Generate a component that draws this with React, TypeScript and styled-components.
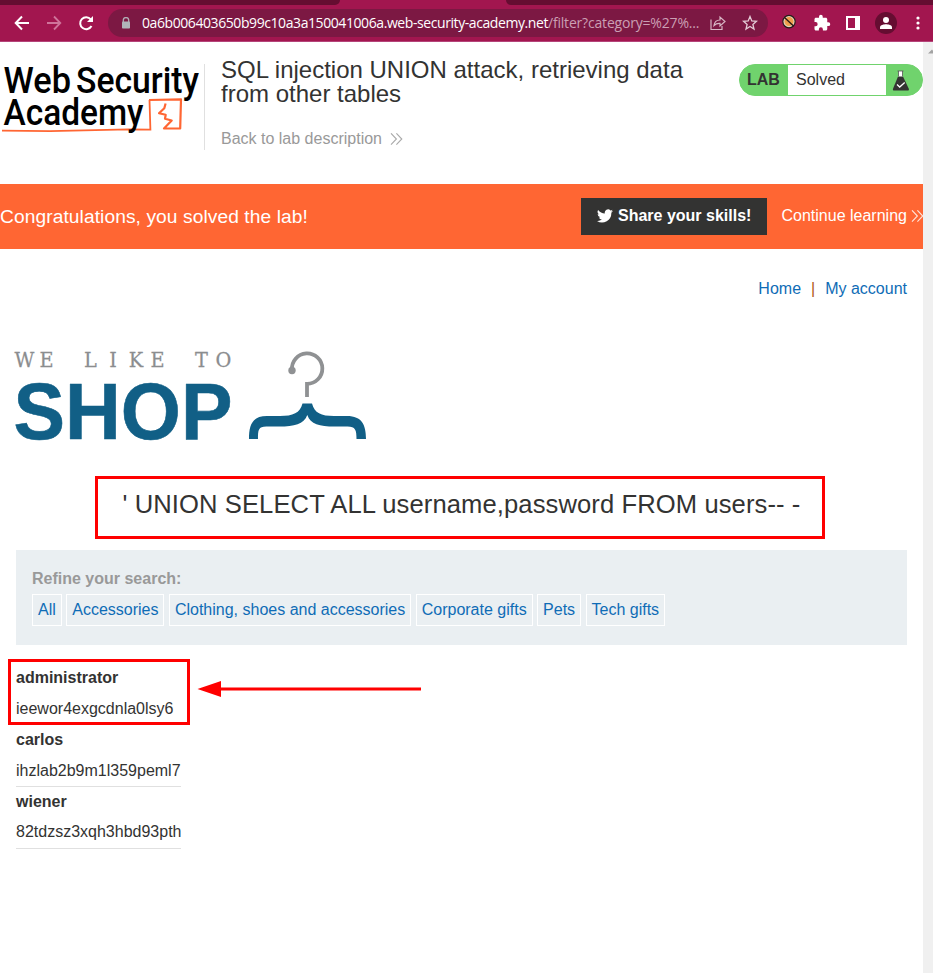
import React from "react";
import styled, { createGlobalStyle } from "styled-components";

const GlobalStyle = createGlobalStyle`
  * { box-sizing: border-box; }
  html, body { margin: 0; padding: 0; background: #fff; overflow: hidden; }
  body { font-family: "Liberation Sans", Arial, sans-serif; font-size: 16px; color: #333332; }
  a { text-decoration: none; color: inherit; }
  svg { display: block; flex: none; }
`;

const Window = styled.div`
  width: 933px;
  height: 973px;
  display: flex;
  flex-direction: column;
  overflow: hidden;
`;

const TabStrip = styled.div`
  height: 5px;
  flex: none;
  background: #a2164f;
  display: flex;
  justify-content: space-between;
`;

const StripPart = styled.div<{ $side: "left" | "right" }>`
  background: #650d31;
  width: ${(p) => (p.$side === "left" ? 340 : 427)}px;
  border-radius: ${(p) => (p.$side === "left" ? "0 0 6px 0" : "0 0 0 6px")};
`;

const Toolbar = styled.div`
  height: 37px;
  flex: none;
  background: #a2164f;
  border-bottom: 1px solid #b5457a;
  display: flex;
  align-items: center;
  padding-left: 14px;
`;

const NavButtons = styled.div`
  display: flex;
  gap: 16px;
  width: 94px;
`;

const AddressBar = styled.div`
  width: 660px;
  height: 28px;
  border-radius: 14px;
  background: #7c1843;
  display: flex;
  align-items: center;
  padding: 0 10px 0 13px;
`;

const Url = styled.div`
  font-family: "Open Sans", "Noto Sans", sans-serif;
  font-size: 14px;
  letter-spacing: -0.42px;
  line-height: 20px;
  white-space: nowrap;
  color: #fff;
  width: 568px;
  margin-left: 11px;
  padding-bottom: 1px;
`;

const UrlPath = styled.span`
  color: #cb9fb3;
  letter-spacing: -0.19px;
`;

const AddressIcons = styled.div`
  display: flex;
  gap: 16px;
`;

const Extensions = styled.div`
  display: flex;
  align-items: center;
  margin-left: 12px;
  gap: 14.5px;
`;

const Avatar = styled.div`
  width: 22px;
  height: 22px;
  border-radius: 50%;
  background: #650d31;
  display: flex;
  align-items: center;
  justify-content: center;
  margin: 0 -1px;
`;

const Viewport = styled.div`
  flex: 1;
  display: flex;
  min-height: 0;
`;

const Page = styled.div`
  width: 923px;
  flex: none;
`;

const Scrollbar = styled.div`
  width: 10px;
  background: #f0f0f0;
  overflow: hidden;
  padding: 7px 0 0 5px;
`;

const Header = styled.header`
  height: 142px;
  display: flex;
  padding-top: 16px;
`;

const LogoCell = styled.div`
  width: 205px;
  height: 92px;
  flex: none;
  display: flex;
`;

const HeaderDivider = styled.div`
  width: 1px;
  height: 86px;
  margin-top: 6px;
  background: #e0e0e0;
`;

const TitleBlock = styled.div`
  width: 534px;
  flex: none;
  padding-left: 16px;
`;

const Title = styled.h2`
  margin: 0;
  font-size: 24px;
  line-height: 24px;
  font-weight: 400;
  white-space: nowrap;
`;

const BackLink = styled.a`
  display: flex;
  align-items: center;
  gap: 8px;
  margin-top: 24px;
  line-height: 18px;
  color: #999;
`;

const StatusPill = styled.div`
  width: 184px;
  height: 32px;
  margin-top: 6px;
  border: 1px solid #70d36d;
  border-radius: 16px;
  background: #70d36d;
  display: flex;
  overflow: hidden;
  line-height: 30px;
`;

const StatusTag = styled.div`
  width: 48px;
  padding-left: 7px;
  font-weight: 700;
`;

const StatusText = styled.div`
  width: 98px;
  padding-left: 8px;
  background: #fff;
`;

const StatusIcon = styled.div`
  padding: 5px 0 0 6px;
`;

const Banner = styled.section`
  height: 65px;
  background: #ff6633;
  color: #fff;
  display: flex;
  align-items: center;
`;

const BannerText = styled.div`
  width: 581px;
  flex: none;
  font-size: 19.2px;
  letter-spacing: 0.08px;
  white-space: nowrap;
`;

const ShareButton = styled.a`
  width: 186px;
  height: 37px;
  flex: none;
  background: #333332;
  font-weight: 700;
  display: flex;
  align-items: center;
  gap: 5px;
  padding: 0 0 2px 16px;
  white-space: nowrap;
`;

const ContinueLink = styled.a`
  display: flex;
  align-items: center;
  gap: 4px;
  margin-left: 14.5px;
  padding-bottom: 1px;
  white-space: nowrap;
`;

const TopNav = styled.nav`
  display: flex;
  justify-content: flex-end;
  gap: 10px;
  padding: 31px 16px 0 0;
  height: 87px;
  line-height: 18px;
`;

const NavLink = styled.a`
  color: #0f6cb6;
`;

const NavBar = styled.span`
  color: #b05a12;
`;

const ShopLogo = styled.div`
  height: 140px;
  padding: 9px 0 0 12px;
`;

const Heading = styled.div`
  width: 730px;
  height: 63px;
  margin-left: 95px;
  border: 3px solid #f00;
  display: flex;
  padding-left: 24.5px;
  font-size: 25.6px;
  letter-spacing: 0.09px;
  line-height: 51px;
  white-space: pre;
`;

const Filters = styled.section`
  margin: 11px 16px 0;
  height: 95px;
  background: #eaeff2;
  padding: 20px 16px;
`;

const FilterLabel = styled.div`
  line-height: 18px;
  font-weight: 700;
  color: #999;
`;

const FilterRow = styled.div`
  display: flex;
  gap: 4.45px;
  margin-top: 6px;
`;

const FilterChip = styled.a`
  height: 32px;
  line-height: 29px;
  padding: 0 5px;
  border: 1px solid #fff;
  color: #0f6cb6;
  white-space: nowrap;
`;

const Results = styled.section`
  display: flex;
  align-items: flex-start;
  padding: 14px 0 0 8px;
`;

const UserList = styled.div`
  width: 182px;
`;

const UserName = styled.div`
  font-weight: 700;
  line-height: 20px;
  white-space: nowrap;
`;

const Password = styled.div`
  line-height: 20px;
  margin-top: 11px;
  white-space: nowrap;
`;

const User = styled.div`
  width: 165px;
  height: 63px;
  margin-left: 8px;
  padding-top: 6px;
  border-bottom: 1px solid #e0e0e0;

  &:last-child {
    height: 62px;
    padding-top: 5px;
  }
  &:last-child ${Password} {
    margin-top: 10px;
  }
`;

const MarkedUser = styled.div`
  width: 182px;
  height: 66px;
  margin-bottom: -1px;
  padding: 6px 0 0 5px;
  border: 3px solid #f00;
`;

const ArrowCell = styled.div`
  margin: 20px 0 0 7px;
`;

const users = [
  { name: "administrator", password: "ieewor4exgcdnla0lsy6", marked: true },
  { name: "carlos", password: "ihzlab2b9m1l359peml7" },
  { name: "wiener", password: "82tdzsz3xqh3hbd93pth" },
];

const filters = ["All", "Accessories", "Clothing, shoes and accessories", "Corporate gifts", "Pets", "Tech gifts"];

const DoubleChevron = ({ color }: { color: string }) => (
  <svg width="13" height="13" viewBox="0 0 13 13" fill="none" stroke={color} strokeWidth="1.1">
    <path d="M1 .3 6.400 6 1 11.700M6.400 .3l5.400 5.700-5.400 5.700" />
  </svg>
);

const AcademyLogo = () => (
  <svg width="204" height="80" viewBox="0 58 204 80">
    <path d="M2 130.600 50 131.200l79-1.800 21.400.3-.9-29.700" fill="none" stroke="#ff6633" strokeWidth="1.800" />
    <path d="M149 100 181 99.300l-.8 29.100-16.200.1 7.700-8-6.700-1.800.7-4-6.700-1.500 5.300-5 1.300-4.700" fill="none" stroke="#ff6633" strokeWidth="2.200" strokeLinejoin="round" />
    <g fontFamily="Roboto, sans-serif" fontWeight="500" fill="#000" fontSize="37.500">
      <text x="3.500" y="92.500" textLength="67.500" lengthAdjust="spacingAndGlyphs">Web</text>
      <text x="76" y="92.500" textLength="123" lengthAdjust="spacingAndGlyphs">Security</text>
      <text x="3.500" y="125" textLength="140" lengthAdjust="spacingAndGlyphs">Academy</text>
    </g>
  </svg>
);

const HangerLogo = () => (
  <svg width="360" height="100" viewBox="12 345 360 100">
    <text
      transform="scale(.92 1)"
      x="26.600 50.500 62 98.400 122.800 147.800 171.200 185 219 242.900"
      y="367.300"
      textAnchor="middle"
      fontFamily="'DejaVu Serif', serif"
      fontSize="21"
      fill="#8b8d8f"
      stroke="#8b8d8f"
      strokeWidth=".25"
    >WE LIKE TO</text>
    <text x="13.500" y="438.500" textLength="219" lengthAdjust="spacingAndGlyphs" fontFamily="'Liberation Sans', sans-serif" fontWeight="700" fontSize="80" fill="#115f86" stroke="#115f86" strokeWidth=".6">SHOP</text>
    <circle cx="292" cy="370.500" r="3.700" fill="#8f9193" />
    <path d="M292 370a15.200 15.200 0 1 1 15 13.800V397" fill="none" stroke="#8f9193" strokeWidth="3.800" />
    <path d="M249 439c0-14 3-23 18-23h13c13 0 20-3 22.500-12.500h9.500c2.500 9.500 9 12.500 22 12.500h13c15 0 19 9 19 23h-9.500c0-9-1-12.500-9-12.500h-13c-15 0-24-2-27.200-11.500-3.500 9.500-13 11.500-28 11.500h-13c-8 0-8.300 3.500-8.300 12.500z" fill="#115f86" />
  </svg>
);

export default function App() {
  return (
    <Window>
      <GlobalStyle />
      <TabStrip>
        <StripPart $side="left" />
        <StripPart $side="right" />
      </TabStrip>
      <Toolbar>
        <NavButtons>
          <svg width="16" height="16" viewBox="0 0 16 16" fill="none" stroke="#fff" strokeWidth="2"><path d="M15 8H2M8 1.500 1.700 8 8 14.500" /></svg>
          <svg width="16" height="16" viewBox="0 0 16 16" fill="none" stroke="#cf749b" strokeWidth="1.800"><path d="M1 8h13M8 1.500 14.300 8 8 14.500" /></svg>
          <svg width="16" height="16" viewBox="0 0 16 16" fill="none" stroke="#fff" strokeWidth="2"><path d="M13.500 11A6 6 0 1 1 12.800 4.300L14 6" /><path d="M15 1v6H9z" fill="#fff" stroke="none" /></svg>
        </NavButtons>
        <AddressBar>
          <svg width="10" height="12" viewBox="0 0 10 12"><path d="M2.300 5V3.300a2.700 2.700 0 0 1 5.400 0V5" fill="none" stroke="#b0adb5" strokeWidth="1.300" /><rect x="1" y="4.500" width="8" height="7" rx=".8" fill="#b0b3b8" /></svg>
          <Url>0a6b006403650b99c10a3a150041006a.web-security-academy.net<UrlPath>/filter?category=%27%...</UrlPath></Url>
          <AddressIcons>
            <svg width="16" height="16" viewBox="0 0 16 16" fill="none" stroke="#d7b5c4" strokeWidth="1.200"><path d="M1 4.500v10h11V11M4 10.500c.5-4 2.500-5.500 6-5.500V2l5 4.500-5 4.500V8.400c-3-.2-4.500.5-6 2.100z" /></svg>
            <svg width="16" height="16" viewBox="0 0 16 16" fill="none" stroke="#e4ccd7" strokeWidth="1.300"><path d="m8 1.500 1.800 4.400 4.700.4-3.600 3.100 1.100 4.600L8 11.500 4 14l1.100-4.600-3.600-3.100 4.700-.4z" /></svg>
          </AddressIcons>
        </AddressBar>
        <Extensions>
          <svg width="18" height="18" viewBox="0 0 18 18"><circle cx="9" cy="7.600" r="6.200" fill="#e5d5bd" stroke="#261d18" strokeWidth="1.200" /><circle cx="9" cy="7.600" r="4.500" fill="#ef9e4c" /><path d="m4.500 3.500 9 8.500" stroke="#271915" strokeWidth="1.300" /></svg>
          <svg width="18" height="18" viewBox="0 0 24 24" fill="#fff"><path d="M20.500 11H19V7c0-1.100-.9-2-2-2h-4V3.500a2.500 2.500 0 0 0-5 0V5H4c-1.100 0-2 .9-2 2v3.800h1.500a2.700 2.700 0 0 1 0 5.400H2V20c0 1.100.9 2 2 2h3.800v-1.500a2.700 2.700 0 0 1 5.400 0V22H17c1.100 0 2-.9 2-2v-4h1.500a2.500 2.500 0 0 0 0-5z" /></svg>
          <svg width="16" height="16" viewBox="0 0 16 16"><path fill="#fff" fillRule="evenodd" d="M1 1h14v14H1zM3 3v10h7V3z" /></svg>
          <Avatar>
            <svg width="14" height="14" viewBox="0 0 14 14" fill="#fff"><circle cx="7" cy="4" r="3" /><path d="M1 13v-1.800C1 9 5 8.300 7 8.300s6 .7 6 2.900V13z" /></svg>
          </Avatar>
          <svg width="16" height="16" viewBox="0 0 16 16" fill="#fff"><circle cx="8" cy="3" r="1.600" /><circle cx="8" cy="8" r="1.600" /><circle cx="8" cy="13" r="1.600" /></svg>
        </Extensions>
      </Toolbar>
      <Viewport>
        <Page>
          <Header>
            <LogoCell>
              <AcademyLogo />
              <HeaderDivider />
            </LogoCell>
            <TitleBlock>
              <Title>SQL injection UNION attack, retrieving data<br />from other tables</Title>
              <BackLink>Back to lab description <DoubleChevron color="#aaa" /></BackLink>
            </TitleBlock>
            <StatusPill>
              <StatusTag>LAB</StatusTag>
              <StatusText>Solved</StatusText>
              <StatusIcon>
                <svg width="18" height="21" viewBox="0 0 18 21"><path d="M6.500 1h4v6l-4 .5z" fill="#fff" /><path d="M5.500 1h6M6.500 1v5M10.500 1v5" stroke="#555" strokeWidth=".8" /><path d="M6 6.500h5l5.800 12.200c.3.800 0 1.800-1 1.800H2c-1 0-1.300-1-1-1.800z" fill="#333332" /><path d="m5 14.500 2.700 2.500 5-4.500" fill="none" stroke="#fff" strokeWidth="1.300" /></svg>
              </StatusIcon>
            </StatusPill>
          </Header>
          <Banner>
            <BannerText>Congratulations, you solved the lab!</BannerText>
            <ShareButton>
              <svg width="16" height="14" viewBox="0 0 24 20" fill="#fff"><path d="M24 2.400a10 10 0 0 1-2.800.8A5 5 0 0 0 23.300.500a10 10 0 0 1-3.100 1.200A4.900 4.900 0 0 0 11.800 6.200 14 14 0 0 1 1.700 1a4.900 4.900 0 0 0 1.500 6.600A5 5 0 0 1 1 7v.1A4.900 4.900 0 0 0 4.900 11.900a5 5 0 0 1-2.200.1 4.900 4.900 0 0 0 4.600 3.400A9.900 9.900 0 0 1 0 17.500 14 14 0 0 0 21.500 5z" /></svg>
              Share your skills!
            </ShareButton>
            <ContinueLink>Continue learning <DoubleChevron color="#ffe4da" /></ContinueLink>
          </Banner>
          <TopNav>
            <NavLink>Home</NavLink>
            <NavBar>|</NavBar>
            <NavLink>My account</NavLink>
          </TopNav>
          <ShopLogo><HangerLogo /></ShopLogo>
          <Heading>' UNION SELECT ALL username,password FROM users-- -</Heading>
          <Filters>
            <FilterLabel>Refine your search:</FilterLabel>
            <FilterRow>
              {filters.map((f) => <FilterChip key={f}>{f}</FilterChip>)}
            </FilterRow>
          </Filters>
          <Results>
            <UserList>
              {users.map((u) => {
                const Row = u.marked ? MarkedUser : User;
                return (
                  <Row key={u.name}>
                    <UserName>{u.name}</UserName>
                    <Password>{u.password}</Password>
                  </Row>
                );
              })}
            </UserList>
            <ArrowCell>
              <svg width="224" height="18" viewBox="0 0 224 18"><path d="M.5 10 24 2v16zM23 8.500h201v3H23z" fill="#f00" /></svg>
            </ArrowCell>
          </Results>
        </Page>
        <Scrollbar>
          <svg width="8" height="5" viewBox="0 0 8 5"><path d="M0 4.500 4 .5l4 4z" fill="#a3a3a3" /></svg>
        </Scrollbar>
      </Viewport>
    </Window>
  );
}
